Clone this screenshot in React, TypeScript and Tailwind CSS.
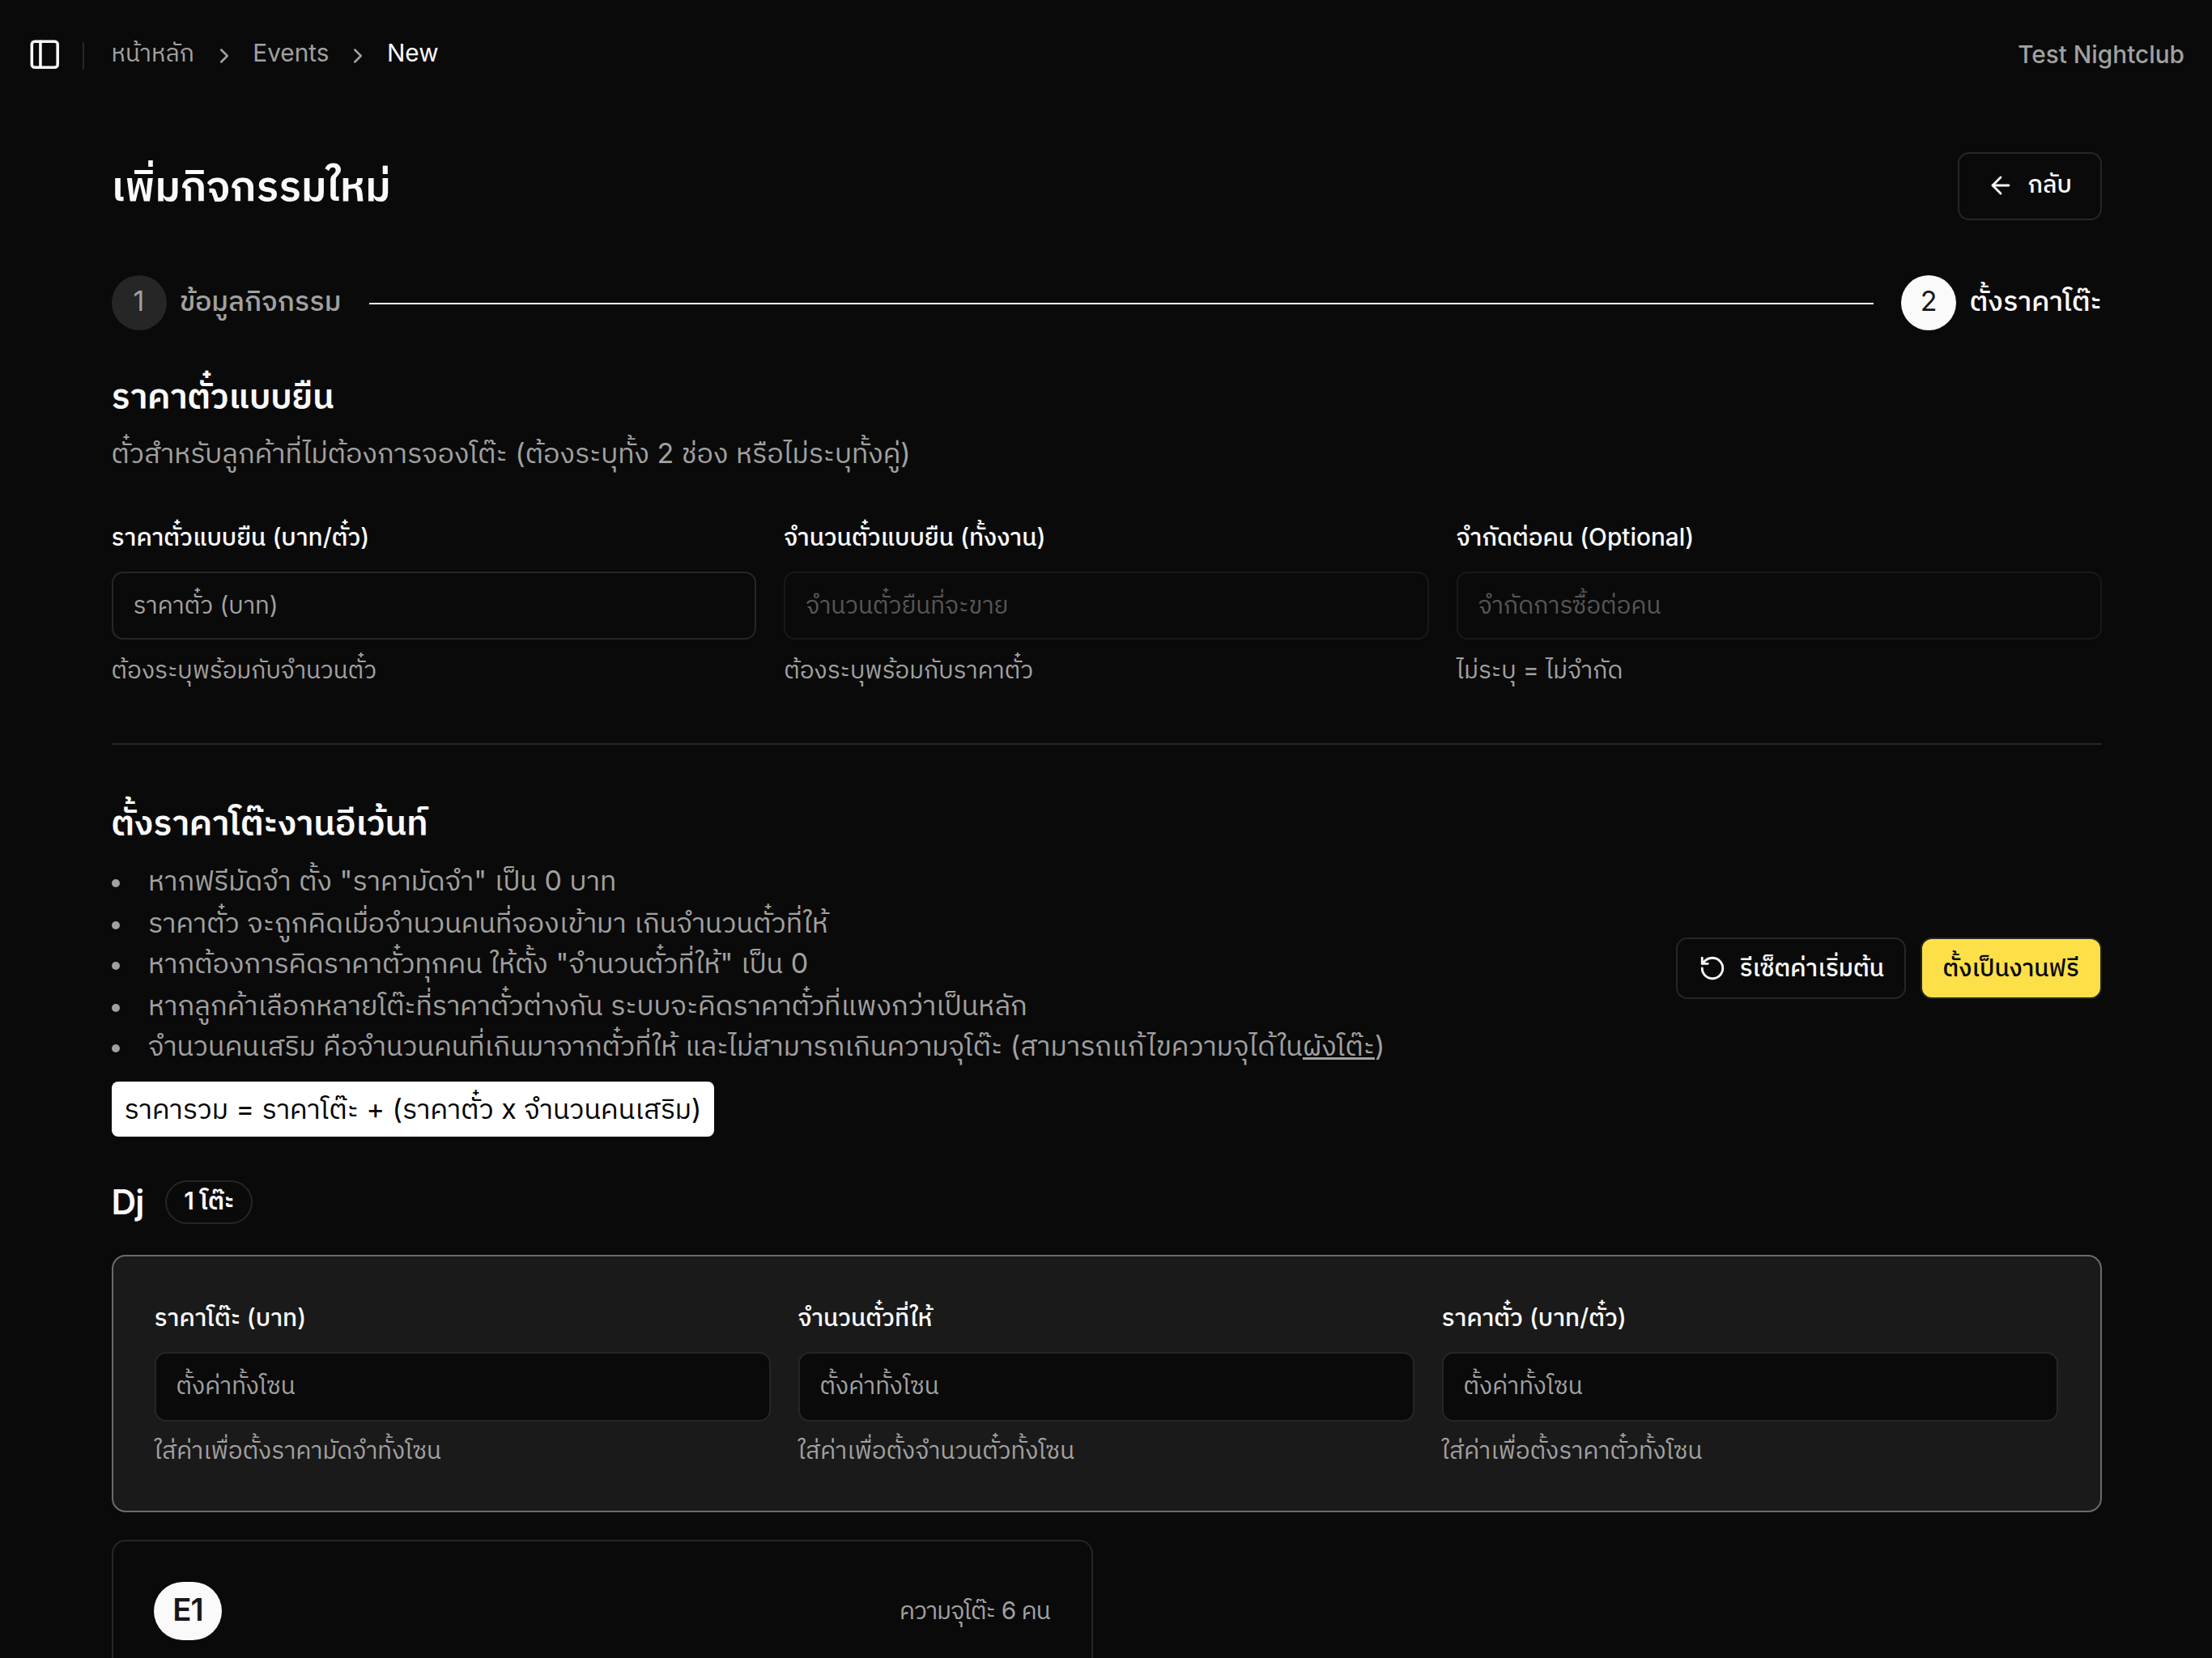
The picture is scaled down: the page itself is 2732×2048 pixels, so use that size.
import type { ReactNode } from 'react';
import { ArrowLeft, ChevronRight, PanelLeft, RotateCcw } from 'lucide-react';

type FieldProps = {
  label: ReactNode;
  placeholder: ReactNode;
  hint: ReactNode;
  disabled?: boolean;
  tall?: boolean;
};

function Field({ label, placeholder, hint, disabled, tall }: FieldProps) {
  return (
    <div className="flex min-w-0 flex-1 flex-col whitespace-nowrap text-[29.75px] leading-[42px]">
      <div className="font-medium text-[#fafafa]">{label}</div>
      <div
        className={`mt-[22px] flex items-center rounded-[14px] border-2 border-[#262626] bg-[#0a0a0a] px-[25px] text-[#a1a1a1] ${tall ? 'h-[86px] pb-[4px]' : 'h-[84px] pb-[2px]'} ${disabled ? 'opacity-50' : ''}`}
      >
        {placeholder}
      </div>
      <div className={`text-[#a1a1a1] ${tall ? 'mt-[14px]' : 'mt-[16px]'}`}>{hint}</div>
    </div>
  );
}

function Rule({ children }: { children: ReactNode }) {
  return (
    <li className="flex items-center even:translate-y-px">
      <span className="mt-[6px] mr-[35.5px] size-[10px] rounded-full bg-[#a1a1a1]" />
      <span>{children}</span>
    </li>
  );
}

export default function App() {
  return (
    <div className="h-[2048px] w-[2732px] overflow-hidden bg-[#0a0a0a] font-[Inter,'IBM_Plex_Sans_Thai','Noto_Sans_Thai',sans-serif] text-[#fafafa]">
      <header className="flex h-[134px] items-center justify-between px-[34px] text-[29.75px]">
        <div className="flex items-center">
          <PanelLeft className="size-[42.5px]" strokeWidth={2} />
          <div className="mt-[4px] ml-[25px] h-[34px] w-[2px] bg-[#262626]" />
          <nav className="ml-[34px] flex items-center pb-[3px] text-[#a1a1a1]">
            <span>หน้าหลัก</span>
            <ChevronRight className="mt-[6px] mr-[20.5px] ml-[22px] size-[30px]" />
            <span>Events</span>
            <ChevronRight className="mt-[6px] mr-[20.5px] ml-[21px] size-[30px]" />
            <span className="text-[#fafafa]">New</span>
          </nav>
        </div>
        <span className="font-medium text-[#a1a1a1]">Test Nightclub</span>
      </header>

      <main className="pr-[136.5px] pl-[137.5px]">
        <div className="mt-[54px] flex h-[84px] items-center justify-between">
          <h1 className="text-[51px] leading-[68px] font-semibold">เพิ่มกิจกรรมใหม่</h1>
          <button className="flex h-[84px] w-[178px] items-center rounded-[14px] border-2 border-[#262626] pl-[34px] text-[29.75px] font-medium">
            <ArrowLeft className="mb-[2px] size-[34px]" />
            <span className="ml-[17px] pb-[5px]">กลับ</span>
          </button>
        </div>

        <div className="mt-[68px] flex h-[68px] items-center text-[34px]">
          <div className="flex size-[68px] items-center justify-center rounded-full bg-[#262626] pb-[5px] text-[#a1a1a1]">1</div>
          <span className="ml-[16.5px] pb-[5px] font-medium text-[#a1a1a1]">ข้อมูลกิจกรรม</span>
          <div className="mr-[34px] ml-[34.5px] mt-[2px] h-[2px] flex-1 bg-[#fafafa]" />
          <div className="flex size-[68px] items-center justify-center rounded-full bg-[#fafafa] pb-[5px] text-[#171717]">2</div>
          <span className="ml-[16.5px] pb-[5px] font-medium">ตั้งราคาโต๊ะ</span>
        </div>

        <section>
          <h2 className="mt-[55px] text-[42.5px] leading-[52px] font-semibold">ราคาตั๋วแบบยืน</h2>
          <p className="mt-[19px] text-[34px] leading-[52px] text-[#a1a1a1]">
            ตั๋วสำหรับลูกค้าที่ไม่ต้องการจองโต๊ะ (ต้องระบุทั้ง 2 ช่อง หรือไม่ระบุทั้งคู่)
          </p>
          <div className="mt-[56px] flex gap-[34px]">
            <Field label="ราคาตั๋วแบบยืน (บาท/ตั๋ว)" placeholder="ราคาตั๋ว (บาท)" hint="ต้องระบุพร้อมกับจำนวนตั๋ว" />
            <Field label="จำนวนตั๋วแบบยืน (ทั้งงาน)" placeholder="จำนวนตั๋วยืนที่จะขาย" hint="ต้องระบุพร้อมกับราคาตั๋ว" disabled />
            <Field label="จำกัดต่อคน (Optional)" placeholder="จำกัดการซื้อต่อคน" hint="ไม่ระบุ = ไม่จำกัด" disabled />
          </div>
        </section>

        <div className="mt-[70px] h-[2px] bg-[#262626]" />

        <section className="mt-[70px] flex items-center justify-between">
          <div>
            <h2 className="text-[42.5px] leading-[52px] font-semibold">ตั้งราคาโต๊ะงานอีเว้นท์</h2>
            <ul className="mt-[20px] text-[34px] leading-[51px] text-[#a1a1a1]">
              <Rule>หากฟรีมัดจำ ตั้ง "ราคามัดจำ" เป็น 0 บาท</Rule>
              <Rule>ราคาตั๋ว จะถูกคิดเมื่อจำนวนคนที่จองเข้ามา เกินจำนวนตั๋วที่ให้</Rule>
              <Rule>หากต้องการคิดราคาตั๋วทุกคน ให้ตั้ง "จำนวนตั๋วที่ให้" เป็น 0</Rule>
              <Rule>หากลูกค้าเลือกหลายโต๊ะที่ราคาตั๋วต่างกัน ระบบจะคิดราคาตั๋วที่แพงกว่าเป็นหลัก</Rule>
              <Rule>
                จำนวนคนเสริม คือจำนวนคนที่เกินมาจากตั๋วที่ให้ และไม่สามารถเกินความจุโต๊ะ (สามารถแก้ไขความจุได้ใน
                <a className="underline">ผังโต๊ะ</a>)
              </Rule>
            </ul>
            <div className="mt-[19px] flex h-[68px] w-[744px] items-center rounded-[8px] bg-white pb-[1px] pl-[16px] text-[34px] whitespace-nowrap text-black">
              ราคารวม = ราคาโต๊ะ + (ราคาตั๋ว x จำนวนคนเสริม)
            </div>
          </div>
          <div className="mb-[2px] flex gap-[18px] text-[29.75px] font-medium whitespace-nowrap">
            <button className="flex h-[76px] w-[284px] items-center rounded-[14px] border-2 border-[#262626] pl-[26px]">
              <RotateCcw className="size-[34px]" />
              <span className="ml-[17px] pb-[2px]">รีเซ็ตค่าเริ่มต้น</span>
            </button>
            <button className="flex h-[76px] w-[224px] items-center rounded-[14px] border-2 border-[#262626] bg-[#fde047] pl-[26px] text-[#0a0a0a]">
              <span className="pb-[2px]">ตั้งเป็นงานฟรี</span>
            </button>
          </div>
        </section>

        <section className="mt-[54px]">
          <div className="flex h-[54px] items-center">
            <h3 className="text-[42.5px] leading-[52px] font-semibold tracking-tight">Dj</h3>
            <span className="ml-[27px] flex h-[54px] w-[108px] items-center justify-center rounded-full border-2 border-[#262626] pb-[3px] text-[29.75px] font-semibold whitespace-nowrap">
              1 โต๊ะ
            </span>
          </div>
          <div className="mt-[38px] flex h-[318px] gap-[34px] rounded-[17px] border-2 border-[#6b6b6b] bg-[#1a1a1a] pt-[54px] pr-[52px] pl-[51px]">
            <Field label="ราคาโต๊ะ (บาท)" placeholder="ตั้งค่าทั้งโซน" hint="ใส่ค่าเพื่อตั้งราคามัดจำทั้งโซน" tall />
            <Field label="จำนวนตั๋วที่ให้" placeholder="ตั้งค่าทั้งโซน" hint="ใส่ค่าเพื่อตั้งจำนวนตั๋วทั้งโซน" tall />
            <Field label="ราคาตั๋ว (บาท/ตั๋ว)" placeholder="ตั้งค่าทั้งโซน" hint="ใส่ค่าเพื่อตั้งราคาตั๋วทั้งโซน" tall />
          </div>
          <div className="mt-[34px] grid grid-cols-2 gap-[34px]">
            <div className="flex h-[600px] items-start justify-between rounded-[17px] border-2 border-[#262626] px-[50.5px] pt-[50px] tracking-[-0.85px]">
              <span className="flex h-[72px] w-[84px] items-center justify-center rounded-full bg-[#fafafa] pb-[2px] text-[38.25px] font-semibold text-[#171717]">
                E1
              </span>
              <span className="text-[29.75px] leading-[71px] text-[#a1a1a1]">ความจุโต๊ะ 6 คน</span>
            </div>
          </div>
        </section>
      </main>
    </div>
  );
}
